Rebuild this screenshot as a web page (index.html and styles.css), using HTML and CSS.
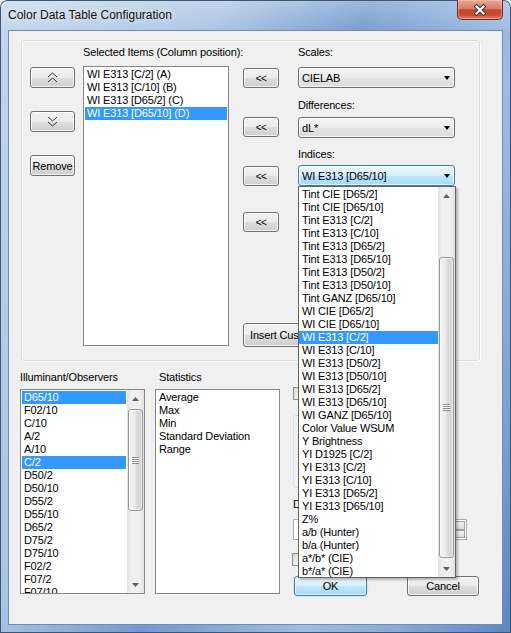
FILE: index.html
```html
<!DOCTYPE html>
<html lang="en">
<head>
    <meta charset="UTF-8">
    <title>Color Data Table Configuration</title>
    <link rel="stylesheet" href="styles.css">
</head>
<body>
<div class="window">
    <div class="titlebar">
        <span class="title">Color Data Table Configuration</span>
        <div class="close-btn">
            <svg width="14" height="12" viewBox="0 0 14 12">
                <path d="M3.5 2.5 L10.5 9.5 M10.5 2.5 L3.5 9.5" stroke="#3d2620" stroke-width="4" stroke-linecap="square"/>
                <path d="M3.5 2.5 L10.5 9.5 M10.5 2.5 L3.5 9.5" stroke="#ffffff" stroke-width="2.2" stroke-linecap="square"/>
            </svg>
        </div>
    </div>

    <div class="client">
        <div class="groupbox">
            <div class="col-move">
                <button class="btn btn-move">
                    <svg width="11" height="11" viewBox="0 0 11 11">
                        <path d="M1 5 L5.5 1 L10 5 M1 10 L5.5 6 L10 10" fill="none" stroke="#333" stroke-width="1"/>
                    </svg>
                </button>
                <button class="btn btn-move">
                    <svg width="11" height="11" viewBox="0 0 11 11">
                        <path d="M1 1 L5.5 5 L10 1 M1 6 L5.5 10 L10 6" fill="none" stroke="#333" stroke-width="1"/>
                    </svg>
                </button>
                <button class="btn btn-move">Remove</button>
            </div>

            <div class="col-selected">
                <div class="label">Selected Items (Column position):</div>
                <div class="listbox selected-list">
                    <div class="item">WI E313 [C/2] (A)</div>
                    <div class="item">WI E313 [C/10] (B)</div>
                    <div class="item">WI E313 [D65/2] (C)</div>
                    <div class="item active">WI E313 [D65/10] (D)</div>
                </div>
            </div>

            <div class="col-add">
                <button class="btn btn-add add-1">&lt;&lt;</button>
                <button class="btn btn-add add-2">&lt;&lt;</button>
                <button class="btn btn-add add-3">&lt;&lt;</button>
                <button class="btn btn-add add-4">&lt;&lt;</button>
                <button class="btn btn-insert">Insert Custom...</button>
            </div>

            <div class="col-scales">
                <div class="label">Scales:</div>
                <div class="combo combo-1"><span>CIELAB</span><i class="combo-arrow"></i></div>
                <div class="label label-2">Differences:</div>
                <div class="combo combo-2"><span>dL*</span><i class="combo-arrow"></i></div>
                <div class="label label-3">Indices:</div>
                <div class="combo combo-3 focused"><span>WI E313 [D65/10]</span><i class="combo-arrow"></i></div>
            </div>
        </div>

        <div class="bottom">
            <div class="col-list">
                <div class="label">Illuminant/Observers</div>
                <div class="listbox bottom-list">
                    <div class="list-items narrow">
                        <div class="item active">D65/10</div>
                        <div class="item">F02/10</div>
                        <div class="item">C/10</div>
                        <div class="item">A/2</div>
                        <div class="item">A/10</div>
                        <div class="item active">C/2</div>
                        <div class="item">D50/2</div>
                        <div class="item">D50/10</div>
                        <div class="item">D55/2</div>
                        <div class="item">D55/10</div>
                        <div class="item">D65/2</div>
                        <div class="item">D75/2</div>
                        <div class="item">D75/10</div>
                        <div class="item">F02/2</div>
                        <div class="item">F07/2</div>
                        <div class="item">F07/10</div>
                    </div>
                    <div class="vscroll">
                        <div class="arr"><svg width="7" height="4" viewBox="0 0 7 4"><polygon points="0,4 3.5,0 7,4" fill="#606060"/></svg></div>
                        <div class="track">
                            <div class="thumb thumb-ill"><i class="grip"></i></div>
                        </div>
                        <div class="arr"><svg width="7" height="4" viewBox="0 0 7 4"><polygon points="0,0 3.5,4 7,0" fill="#606060"/></svg></div>
                    </div>
                </div>
            </div>

            <div class="col-list col-stats">
                <div class="label">Statistics</div>
                <div class="listbox bottom-list">
                    <div class="list-items">
                        <div class="item">Average</div>
                        <div class="item">Max</div>
                        <div class="item">Min</div>
                        <div class="item">Standard Deviation</div>
                        <div class="item">Range</div>
                    </div>
                </div>
            </div>

            <div class="col-options">
                <i class="checkbox check-1"></i>
                <div class="subgroup"></div>
                <div class="label opt-label">Decimals:</div>
                <div class="field">
                    <div class="spin">
                        <i></i>
                        <i></i>
                    </div>
                </div>
                <i class="checkbox check-2"></i>
                <div class="actions">
                    <button class="btn btn-default">OK</button>
                    <button class="btn btn-cancel">Cancel</button>
                </div>
            </div>
        </div>
    </div>

    <div class="dropdown">
        <div class="dd-items">
            <div class="item">Tint CIE [D65/2]</div>
            <div class="item">Tint CIE [D65/10]</div>
            <div class="item">Tint E313 [C/2]</div>
            <div class="item">Tint E313 [C/10]</div>
            <div class="item">Tint E313 [D65/2]</div>
            <div class="item">Tint E313 [D65/10]</div>
            <div class="item">Tint E313 [D50/2]</div>
            <div class="item">Tint E313 [D50/10]</div>
            <div class="item">Tint GANZ [D65/10]</div>
            <div class="item">WI CIE [D65/2]</div>
            <div class="item">WI CIE [D65/10]</div>
            <div class="item active">WI E313 [C/2]</div>
            <div class="item">WI E313 [C/10]</div>
            <div class="item">WI E313 [D50/2]</div>
            <div class="item">WI E313 [D50/10]</div>
            <div class="item">WI E313 [D65/2]</div>
            <div class="item">WI E313 [D65/10]</div>
            <div class="item">WI GANZ [D65/10]</div>
            <div class="item">Color Value WSUM</div>
            <div class="item">Y Brightness</div>
            <div class="item">YI D1925 [C/2]</div>
            <div class="item">YI E313 [C/2]</div>
            <div class="item">YI E313 [C/10]</div>
            <div class="item">YI E313 [D65/2]</div>
            <div class="item">YI E313 [D65/10]</div>
            <div class="item">Z%</div>
            <div class="item">a/b (Hunter)</div>
            <div class="item">b/a (Hunter)</div>
            <div class="item">a*/b* (CIE)</div>
            <div class="item">b*/a* (CIE)</div>
        </div>
        <div class="vscroll">
            <div class="arr"><svg width="7" height="4" viewBox="0 0 7 4"><polygon points="0,4 3.5,0 7,4" fill="#606060"/></svg></div>
            <div class="track">
                <div class="thumb thumb-dd"><i class="grip"></i></div>
            </div>
            <div class="arr"><svg width="7" height="4" viewBox="0 0 7 4"><polygon points="0,0 3.5,4 7,0" fill="#606060"/></svg></div>
        </div>
    </div>
</div>
</body>
</html>
```

FILE: styles.css
```css
* {
    box-sizing: border-box;
}
body {
    margin: 0;
    font-family: "Liberation Sans", Arial, sans-serif;
    font-size: 11px;
    letter-spacing: -0.15px;
    color: #000;
    background: #fff;
}

/* window frame */
.window {
    position: relative;
    width: 511px;
    height: 633px;
    overflow: hidden;
    border-radius: 7px 7px 0 0;
    background:
        linear-gradient(180deg, rgba(255,255,255,0.3) 0px, rgba(255,255,255,0.05) 30px, rgba(0,0,0,0) 31px),
        linear-gradient(110deg, #c3d6ec 0%, #a9c3e3 30%, #7399cc 50%, #9fbde2 72%, #7fa3d2 88%, #5b86bf 100%);
    box-shadow: inset 0 0 0 1px #3f5576;
}
.titlebar {
    height: 30px;
    display: flex;
    align-items: flex-start;
}
.title {
    padding: 8px 0 0 8px;
    font-size: 12px;
    line-height: 15px;
    letter-spacing: 0;
    color: #111;
    text-shadow: 0 0 6px rgba(255,255,255,0.9);
}
.close-btn {
    margin-left: auto;
    margin-right: 8px;
    width: 46px;
    height: 20px;
    border: 1px solid #6d2a1f;
    border-top: none;
    border-radius: 0 0 5px 5px;
    background: linear-gradient(#e6a796 0%, #d57d68 45%, #c4452d 52%, #c94d32 80%, #e08964 100%);
    box-shadow: inset 0 0 0 1px rgba(255,220,210,0.4);
    display: flex;
    align-items: center;
    justify-content: center;
}
.client {
    margin-left: 8px;
    width: 495px;
    height: 595px;
    border: 1px solid #6f8db4;
    background: #f0f0f0;
}

/* common controls */
.label {
    height: 13px;
    line-height: 13px;
    white-space: nowrap;
}
.btn {
    font: inherit;
    letter-spacing: inherit;
    color: #000;
    padding: 0;
    border: 1px solid #707070;
    border-radius: 3px;
    background: linear-gradient(#f2f2f2 0%, #ebebeb 50%, #dddddd 51%, #cfcfcf 100%);
    box-shadow: inset 0 0 0 1px rgba(255,255,255,0.75);
    display: flex;
    align-items: center;
    justify-content: center;
    white-space: nowrap;
}
.listbox {
    border: 1px solid #828790;
    background: #fff;
    overflow: hidden;
}
.item {
    height: 13px;
    line-height: 13px;
    margin: 0 1px;
    padding-left: 2px;
    white-space: nowrap;
}
.item.active {
    background: #3399ff;
    color: #fff;
}

/* top group */
.groupbox {
    margin: 9px 0 0 12px;
    width: 459px;
    height: 321px;
    border: 1px solid #d5dfe5;
    border-radius: 3px;
    box-shadow: inset 1px 1px 0 #fff, 1px 1px 0 #fff;
    display: flex;
    padding: 5px 0 0 8px;
}
.col-move {
    width: 45px;
    padding-top: 21px;
    display: flex;
    flex-direction: column;
}
.btn-move {
    height: 21px;
    margin-bottom: 23px;
}
.col-selected {
    margin-left: 8px;
    width: 146px;
}
.selected-list {
    margin-top: 7px;
    height: 280px;
    padding-top: 1px;
}
.col-add {
    margin-left: 14px;
    width: 36px;
    padding-top: 22px;
    display: flex;
    flex-direction: column;
    align-items: flex-start;
}
.btn-add {
    width: 36px;
    height: 20px;
    font-size: 10px;
    letter-spacing: -0.5px;
}
.add-2, .add-3 { margin-top: 29px; }
.add-4 { margin-top: 26px; }
.btn-insert {
    margin-top: 91px;
    width: 120px;
    height: 24px;
    justify-content: flex-start;
    padding-left: 6px;
}
.col-scales {
    margin-left: 19px;
    width: 157px;
}
.combo {
    height: 21px;
    margin-top: 8px;
    border: 1px solid #707070;
    border-radius: 3px;
    background: linear-gradient(#f3f3f3 0%, #ececec 50%, #e3e3e3 51%, #dddddd 100%);
    box-shadow: inset 0 0 0 1px rgba(255,255,255,0.7);
    display: flex;
    align-items: center;
    padding-left: 3px;
}
.combo-2 { margin-top: 5px; }
.combo-3 { margin-top: 4px; }
.combo.focused {
    border-color: #3c7fb1;
    background: linear-gradient(#eaf6fd 0%, #d9f0fc 50%, #bee6fd 51%, #a7d9f5 100%);
}
.combo-arrow {
    margin-left: auto;
    margin-right: 4px;
    width: 0;
    height: 0;
    border-left: 3.5px solid transparent;
    border-right: 3.5px solid transparent;
    border-top: 4px solid #000;
}
.label-2 { margin-top: 11px; }
.label-3 { margin-top: 10px; }

/* bottom area */
.bottom {
    margin: 10px 0 0 11px;
    display: flex;
}
.col-list {
    width: 125px;
}
.col-stats {
    margin-left: 10px;
}
.col-stats .label {
    padding-left: 4px;
}
.bottom-list {
    margin-top: 5px;
    height: 205px;
    display: flex;
}
.list-items {
    flex: 1;
    padding-top: 1px;
}
.list-items.narrow {
    flex: none;
    width: 106px;
}
.vscroll {
    width: 17px;
    display: flex;
    flex-direction: column;
    background: linear-gradient(90deg, #e2e2e2, #f0f0f0 25%, #f0f0f0 75%, #e2e2e2);
}
.vscroll .arr {
    height: 17px;
    display: flex;
    align-items: center;
    justify-content: center;
}
.vscroll .track {
    flex: 1;
}
.thumb {
    margin: 0 1px;
    border: 1px solid #979797;
    border-radius: 3px;
    background: linear-gradient(90deg, #f4f4f4, #ebebeb 45%, #dcdcdc 55%, #d2d2d2);
    box-shadow: inset 0 0 0 1px rgba(255,255,255,0.6);
    display: flex;
    align-items: center;
    justify-content: center;
}
.thumb-ill {
    margin-top: 2px;
    height: 102px;
}
.thumb-dd {
    margin-top: 53px;
    height: 301px;
}
.grip {
    width: 7px;
    height: 7px;
    background: repeating-linear-gradient(180deg, #8c8c8c 0, #8c8c8c 1px, #f6f6f6 1px, #f6f6f6 2px);
}
.col-options {
    margin-left: 13px;
    width: 186px;
    display: flex;
    flex-direction: column;
    align-items: flex-start;
}
.checkbox {
    width: 13px;
    height: 13px;
    border: 1px solid #8e8f8f;
    background: linear-gradient(135deg, #dcdcdc, #fbfbfb);
}
.check-1 { margin-top: 16px; }
.check-2 { margin-top: 13px; margin-left: -1px; }
.subgroup {
    margin-top: 15px;
    width: 150px;
    height: 73px;
    border: 1px solid #d5dfe5;
    border-radius: 3px;
}
.opt-label {
    margin-top: 10px;
}
.field {
    margin-top: 8px;
    width: 174px;
    height: 21px;
    border: 1px solid #abadb3;
    background: #fff;
    display: flex;
    justify-content: flex-end;
    padding: 1px;
}
.spin {
    width: 10px;
    display: flex;
    flex-direction: column;
}
.spin i {
    flex: 1;
    border: 1px solid #a0a0a0;
    background: linear-gradient(#f2f2f2, #dcdcdc);
}
.actions {
    margin-top: 10px;
    width: 186px;
    display: flex;
    justify-content: space-between;
}
.btn-default {
    margin-left: 1px;
    width: 73px;
    height: 20px;
    border-color: #3c7fb1;
    background: linear-gradient(#eaf6fd 0%, #d9f0fc 50%, #bee6fd 51%, #a7d9f5 100%);
    box-shadow: inset 0 0 0 1px rgba(255,255,255,0.6), 0 0 2px #8fd0f5;
}
.btn-cancel {
    width: 72px;
    height: 20px;
}

/* open combo list */
.dropdown {
    position: absolute;
    left: 298px;
    top: 186px;
    width: 158px;
    height: 392px;
    border: 1px solid #646464;
    background: #fff;
    box-shadow: 2px 2px 2px rgba(0,0,0,0.25);
    display: flex;
    z-index: 10;
}
.dd-items {
    width: 139px;
    padding-top: 1px;
}
.dd-items .item {
    margin: 0;
    padding-left: 3px;
}
```
